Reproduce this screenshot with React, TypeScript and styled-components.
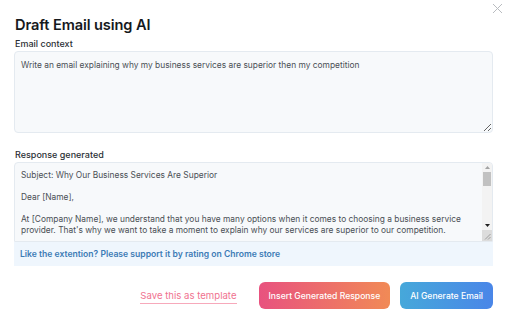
import * as React from 'react';
import styled, {createGlobalStyle} from 'styled-components';

const GlobalStyle = createGlobalStyle`
    html, body {
        margin: 0;
        padding: 0;
        background: #ffffff;
    }
    body {
        font-family: Inter, "Noto Sans", sans-serif;
        color: #1f2328;
    }
`;

const CONTEXT =
    'Write an email explaining why my business services are superior then my competition';

const RESPONSE = `Subject: Why Our Business Services Are Superior

Dear [Name],

At [Company Name], we understand that you have many options when it comes to choosing a business service provider. That's why we want to take a moment to explain why our services are superior to our competition.

First, our team is made up of experienced professionals who are dedicated to providing the best possible service.`;

export default function App() {
    return (
        <>
            <GlobalStyle />
            <Dialog>
                <CloseButton aria-label="Close">
                    <svg width="11" height="11" viewBox="0 0 11 11">
                        <path d="M1 1L10 10M10 1L1 10" stroke="#b9bcc0" strokeWidth="1" fill="none" />
                    </svg>
                </CloseButton>
                <Title>Draft Email using AI</Title>
                <Label>Email context</Label>
                <ContextArea defaultValue={CONTEXT} />
                <Label $spaced>Response generated</Label>
                <ResponseBox>
                    <ResponseArea defaultValue={RESPONSE} />
                    <ScrollTrack>
                        <ScrollArrow>
                            <svg width="5" height="3" viewBox="0 0 5 3">
                                <path d="M0 3L2.5 0L5 3Z" fill="#a3a3a3" />
                            </svg>
                        </ScrollArrow>
                        <ScrollThumb />
                        <ScrollSpacer />
                        <ScrollArrow>
                            <svg width="5" height="3" viewBox="0 0 5 3">
                                <path d="M0 0L2.5 3L5 0Z" fill="#202020" />
                            </svg>
                        </ScrollArrow>
                        <ResizeCorner>
                            <svg width="7" height="7" viewBox="0 0 7 7">
                                <path d="M6.5 1L1 6.5M6.5 4L4 6.5" stroke="#8d8d8d" strokeWidth="0.8" />
                            </svg>
                        </ResizeCorner>
                    </ScrollTrack>
                </ResponseBox>
                <Banner>Like the extention? Please support it by rating on Chrome store</Banner>
                <Footer>
                    <TemplateLink>Save this as template</TemplateLink>
                    <GradientButton $from="#e8527f" $to="#f18a56">
                        Insert Generated Response
                    </GradientButton>
                    <GradientButton $from="#46a8da" $to="#4a86e8">
                        AI Generate Email
                    </GradientButton>
                </Footer>
            </Dialog>
        </>
    );
}

const Dialog = styled.div`
    position: relative;
    width: 512px;
    height: 320px;
    box-sizing: border-box;
    padding: 16px 19px 0 14px;
    display: flex;
    flex-direction: column;
    background: #ffffff;
`;

const CloseButton = styled.div`
    position: absolute;
    top: 3px;
    right: 9px;
    width: 11px;
    height: 11px;
    display: flex;
`;

const Title = styled.div`
    font-size: 14.6px;
    font-weight: 600;
    color: #16191d;
    letter-spacing: -0.1px;
    padding-left: 1px;
    line-height: 18px;
`;

const Label = styled.div<{$spaced?: boolean}>`
    margin-top: ${p => (p.$spaced ? '16px' : '4px')};
    padding-left: 1px;
    font-size: 9px;
    font-weight: 500;
    color: #2b2f35;
    line-height: 12px;
    margin-bottom: 1px;
`;

const BaseArea = styled.textarea`
    display: block;
    width: 100%;
    box-sizing: border-box;
    border: 1px solid #e4eaf0;
    border-radius: 4px;
    background: #f7f9fb;
    font-family: Inter, "Noto Sans", sans-serif;
    font-size: 8.4px;
    line-height: 11px;
    color: #4a4f55;
    padding: 8px 6px;
    outline: none;
    margin: 0;
`;

const ContextArea = styled(BaseArea)`
    height: 82px;
    resize: vertical;
`;

const ResponseBox = styled.div`
    position: relative;
    height: 80px;
`;

const ResponseArea = styled(BaseArea)`
    height: 80px;
    padding: 7px 16px 6px 6px;
    border-radius: 4px 4px 0 0;
    resize: none;
    overflow: hidden;
`;

const ScrollTrack = styled.div`
    position: absolute;
    top: 1px;
    right: 1px;
    bottom: 1px;
    width: 10px;
    display: flex;
    flex-direction: column;
    background: #f3f3f3;
    border-top-right-radius: 3px;
`;

const ScrollArrow = styled.div`
    height: 9px;
    display: flex;
    align-items: center;
    justify-content: center;
`;

const ScrollThumb = styled.div`
    height: 14px;
    margin: 0 1px;
    background: #c1c1c1;
`;

const ScrollSpacer = styled.div`
    flex: 1;
`;

const ResizeCorner = styled.div`
    height: 11px;
    display: flex;
    align-items: flex-end;
    justify-content: flex-end;
    background: #dcdcdc;
    padding: 0 1px 1px 0;
    box-sizing: border-box;
`;

const Banner = styled.div`
    height: 24px;
    display: flex;
    align-items: center;
    padding-left: 6px;
    background: #eff6fd;
    font-size: 8.6px;
    font-weight: 600;
    color: #3c7bb5;
`;

const Footer = styled.div`
    margin-top: 16px;
    display: flex;
    justify-content: flex-end;
    align-items: center;
    gap: 10px;
`;

const TemplateLink = styled.span`
    font-size: 9.6px;
    color: #f0728f;
    border-bottom: 1px solid #f7a9bb;
    padding-bottom: 2px;
    margin-right: 12px;
    margin-top: 2px;
`;

const GradientButton = styled.button<{$from: string; $to: string}>`
    height: 27px;
    padding: 0 10px;
    border: none;
    border-radius: 6px;
    background: linear-gradient(90deg, ${p => p.$from}, ${p => p.$to});
    color: #ffffff;
    font-family: Inter, "Noto Sans", sans-serif;
    font-size: 8.6px;
    font-weight: 500;
    cursor: pointer;
`;
